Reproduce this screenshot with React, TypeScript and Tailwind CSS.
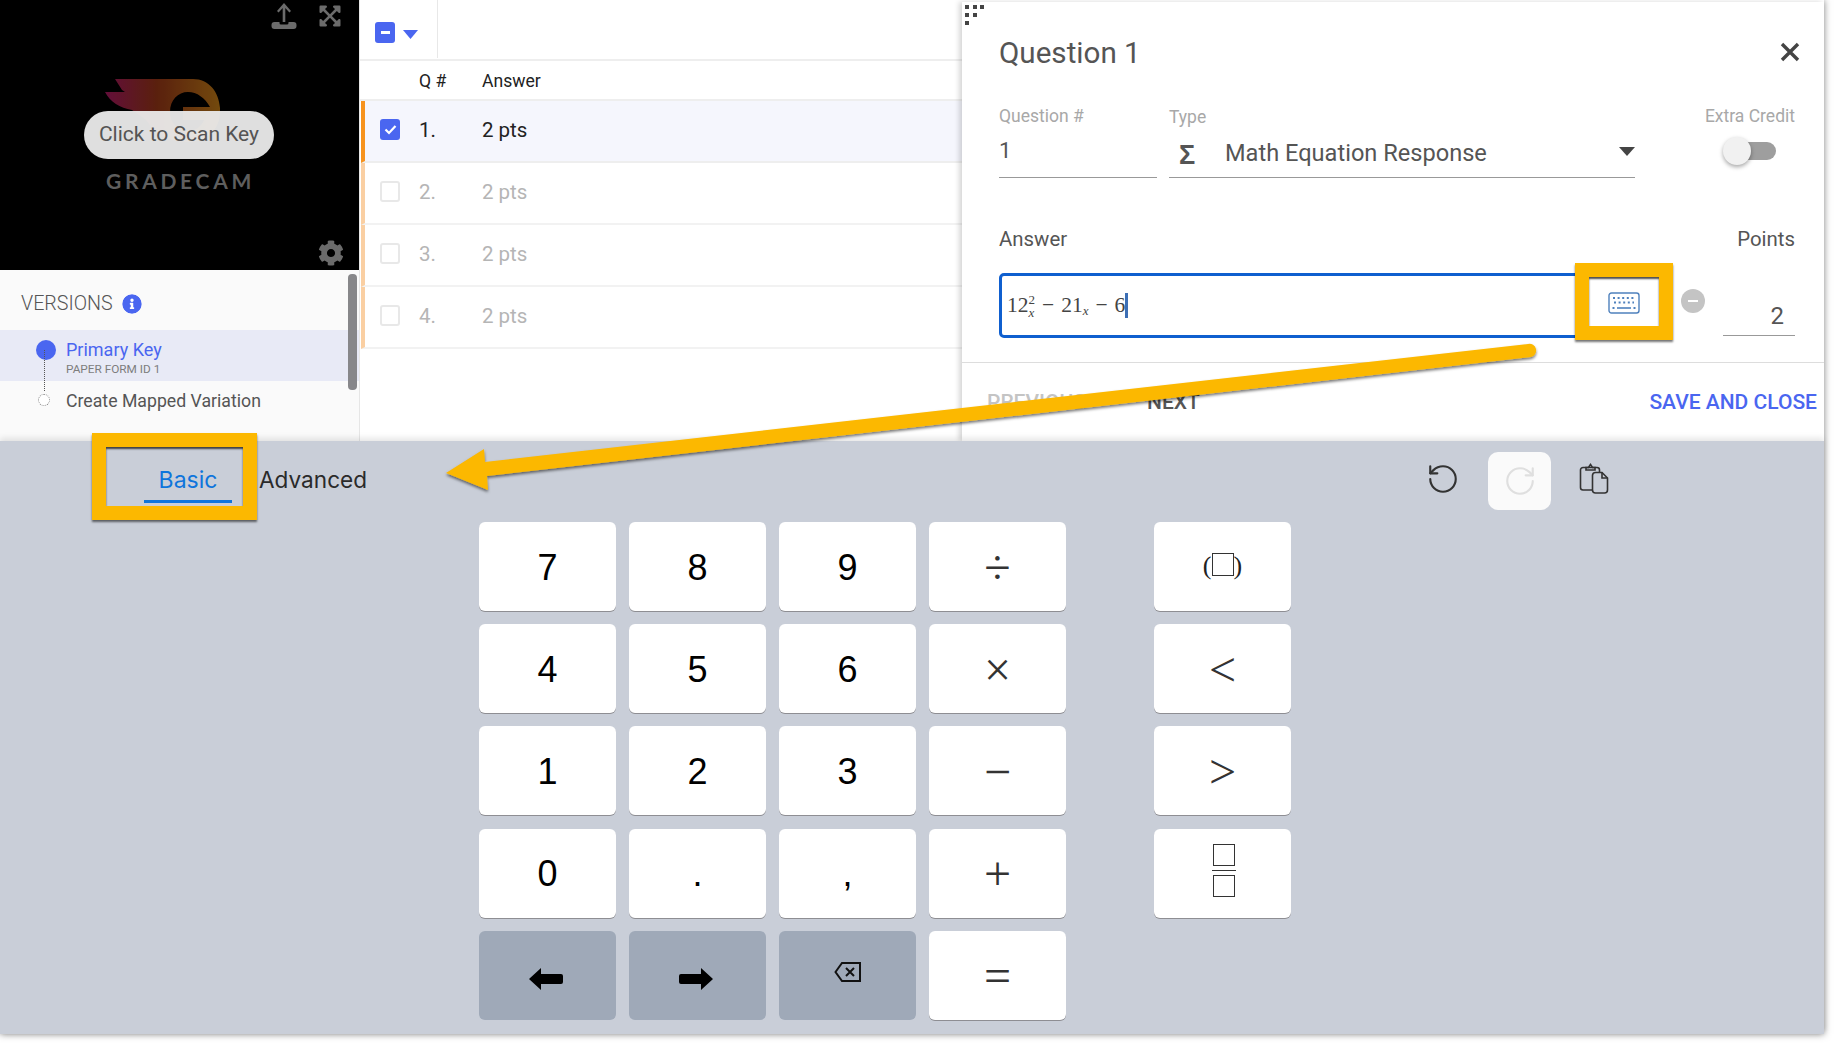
import React from "react";
import { RotateCcw, RotateCw } from "lucide-react";
import { FaCog, FaExpandArrowsAlt, FaInfoCircle } from "react-icons/fa";

const Check = ({ on }: { on?: boolean }) =>
  on ? (
    <div className="w-[20px] h-[21px] rounded-[3px] bg-[#4a66f0] flex items-center justify-center">
      <svg width="13" height="11" viewBox="0 0 13 11"><path d="M1.5 5.5 L5 9 L11.5 2" fill="none" stroke="#fff" strokeWidth="2.2" /></svg>
    </div>
  ) : (
    <div className="w-[20px] h-[21px] rounded-[3px] border-2 border-[#e8e8e8] bg-white" />
  );

const rows = ["1.", "2.", "3.", "4."];

function Sidebar() {
  return (
    <div className="w-[360px] h-full flex flex-col border-r border-[#e6e6e6]">
      <div className="relative h-[270px] w-[359px] bg-black overflow-hidden text-[#6b6b6b]">
        <div className="absolute right-[17px] top-[3px] flex items-start gap-[21px]">
          <svg width="26" height="26" viewBox="0 0 26 26" fill="#6b6b6b">
            <path d="M13 0 L20 8 L18.4 9.4 L14.3 5 V19 H11.7 V5 L7.6 9.4 L6 8 Z" />
            <path d="M0.5 22 a3 3 0 0 1 3-3 H8.5 V20 a1.5 1.5 0 0 0 1.5 1.5 H16 a1.5 1.5 0 0 0 1.5-1.5 V19 H22.5 a3 3 0 0 1 3 3 V23 a3 3 0 0 1-3 3 H3.5 a3 3 0 0 1-3-3 Z" />
          </svg>
          <FaExpandArrowsAlt size={24} className="mt-[1px]" />
        </div>
        <svg className="absolute left-[100px] top-[75px] opacity-90" width="125" height="70" viewBox="100 75 125 70">
          <defs>
            <linearGradient id="lg" x1="0" x2="1" y1="0" y2="0">
              <stop offset="0" stopColor="#6e1040" />
              <stop offset="0.45" stopColor="#64240f" />
              <stop offset="1" stopColor="#80520f" />
            </linearGradient>
          </defs>
          <path fill="url(#lg)" d="M115 79 H193 C209 79 219 92 220 108 V112 C220 130 206 142 188 142 C170 142 156 135 146 120 L132 110 C120 108 110 102 105 92 H125 L122 90 Z" />
          <path fill="#000" d="M210 107 H183 V120 H204 C201 127 195 131 188 131 C177 131 170 122 170 112 C170 100 178 92 188 92 C197 92 205 98 210 107 Z" />
        </svg>
        <div className="absolute left-[84px] top-[111px] w-[190px] h-[48px] rounded-full bg-[#ebebeb]/95 flex items-center justify-center text-[21px] text-[#545454]">Click to Scan Key</div>
        <div className="absolute left-[106px] top-[167px] text-[21px] leading-[28px] font-bold tracking-[3.7px] text-[#5e5e5e] font-['Lato',sans-serif]">GRADECAM</div>
        <FaCog size={26} className="absolute left-[318px] top-[240px]" />
      </div>
      <div className="relative flex-1 bg-[#fafafa]">
        <div className="h-[60px] pt-[7px] flex items-center pl-[21px] gap-[9px] text-[19.7px] font-light text-[#555]">
          VERSIONS <FaInfoCircle size={20} className="text-[#4a66f0] bg-white rounded-full" />
        </div>
        <div className="h-[51px] bg-[#e8eaf6] pl-[66px] relative">
          <div className="absolute left-[36px] top-[10px] w-[20px] h-[20px] rounded-full bg-[#4a66f0]" />
          <div className="text-[18px] leading-[20px] pt-[10px] text-[#4a66f0]">Primary Key</div>
          <div className="text-[11.8px] leading-[19px] text-[#7d7d7d]">PAPER FORM ID 1</div>
        </div>
        <div className="h-[40px] pl-[66px] flex items-center text-[17.7px] text-[#555] relative">
          <div className="absolute left-[38px] top-[13px] w-[12px] h-[12px] rounded-full border border-dotted border-[#888] bg-white" />
          Create Mapped Variation
        </div>
        <div className="absolute left-[44px] top-[80px] h-[41px] border-l border-dotted border-[#555]" />
        <div className="absolute left-[348px] top-[4px] w-[9px] h-[116px] rounded-[4px] bg-[#87878a]" />
      </div>
    </div>
  );
}

function Table() {
  return (
    <div className="w-[602px] h-full bg-white text-[#222]">
      <div className="h-[61px] border-b-2 border-[#eee] flex items-start">
        <div className="w-[78px] h-[58px] border-r border-[#e8e8e8] pl-[15px] pt-[22px] flex items-start gap-[8px]">
          <div className="w-[20px] h-[21px] rounded-[3px] bg-[#4a66f0] flex items-center justify-center">
            <div className="w-[9px] h-[3px] bg-white" />
          </div>
          <svg className="mt-[8px]" width="15" height="9" viewBox="0 0 15 9"><path d="M0 0 H15 L7.5 9 Z" fill="#4a66f0" /></svg>
        </div>
      </div>
      <div className="h-[40px] pt-[2px] flex items-center text-[17.6px] pl-[59px] border-b-2 border-[#eee]">
        <span className="w-[63px]">Q #</span>
        <span>Answer</span>
      </div>
      {rows.map((n, i) => (
        <div
          key={n}
          className={
            i === 0
              ? "ml-[1px] h-[62px] flex items-center border-l-4 border-b-2 border-l-[#f7931e] border-b-[#eee] bg-[#f5f6fd] text-[20.5px] text-[#222]"
              : "ml-[1px] h-[62px] flex items-center border-l-4 border-b-2 border-l-[#facfa2] border-b-[#f2f2f2] text-[20.5px] text-[#b5b5b5]"
          }
        >
          <div className="ml-[15px] w-[39px] mb-[3px]"><Check on={i === 0} /></div>
          <span className="w-[63px] mb-[2px]">{n}</span>
          <span className="mb-[2px]">2 pts</span>
        </div>
      ))}
    </div>
  );
}

function Dialog() {
  return (
    <div className="relative w-[862px] h-[439px] mt-[2px] bg-white flex flex-col shadow-[-3px_0_5px_rgba(0,0,0,0.16)]">
      <div className="absolute left-[3px] top-[3px] grid grid-cols-3 gap-x-[3px] gap-y-[4px] w-[20px]">
        {[1, 1, 1, 1, 1, 0, 1, 0, 0].map((v, i) => (
          <div key={i} className={v ? "w-[4px] h-[4px] bg-[#444]" : "w-[4px] h-[4px]"} />
        ))}
      </div>
      <div className="h-[102px] pt-[33px] px-[37px] flex justify-between items-start">
        <div className="text-[29.6px] leading-[36px] text-[#555]">Question 1</div>
        <svg className="mt-[7px] mr-[-13px]" width="20" height="20" viewBox="0 0 20 20"><path d="M2 2 L18 18 M18 2 L2 18" stroke="#444" strokeWidth="3.4" /></svg>
      </div>
      <div className="h-[74px] flex pl-[37px] pr-[29px]">
        <div className="w-[158px] border-b border-[#999]">
          <div className="text-[17.5px] leading-[24px] text-[#a8a8a8]">Question #</div>
          <div className="text-[22px] leading-[30px] mt-[8px] text-[#555]">1</div>
        </div>
        <div className="w-[466px] ml-[12px] border-b border-[#999]">
          <div className="text-[17.5px] leading-[26px] text-[#a8a8a8]">Type</div>
          <div className="flex items-center mt-[9px] h-[30px] text-[23.6px] text-[#555]">
            <span className="w-[56px] pl-[10px] pt-[2px] text-[27px] font-bold font-['Liberation_Sans',sans-serif]">Σ</span>
            <span>Math Equation Response</span>
            <svg className="ml-auto mb-[6px]" width="16" height="9" viewBox="0 0 16 9"><path d="M0 0 H16 L8 9 Z" fill="#444" /></svg>
          </div>
        </div>
        <div className="ml-auto text-right">
          <div className="text-[17.5px] leading-[24px] text-[#a8a8a8]">Extra Credit</div>
          <div className="relative mt-[9px] ml-auto mr-[19px] w-[53px] h-[30px]">
            <div className="absolute right-[0px] top-[5px] w-[40px] h-[18px] rounded-full bg-[#9e9e9e]" />
            <div className="absolute left-[0px] top-[0px] w-[28px] h-[28px] rounded-full bg-[#f1f1f1] shadow-[0_2px_4px_rgba(0,0,0,0.35)]" />
          </div>
        </div>
      </div>
      <div className="mt-[49px] flex justify-between pl-[37px] pr-[29px] text-[20.4px] leading-[24px] text-[#555]">
        <span>Answer</span>
        <span>Points</span>
      </div>
      <div className="mt-[22px] h-[65px] flex pl-[37px] pr-[29px]">
        <div className="w-[590px] h-[65px] border-[3px] border-[#0f5fcf] rounded-[5px] pl-[5px] flex items-center font-['Liberation_Serif',serif] text-[21.5px] text-[#444]">
          <span>12</span>
          <span className="inline-flex flex-col text-[13px] leading-[13px] mr-[7px]"><span>2</span><i>x</i></span>
          <span className="mr-[7px]">−</span>
          <span>21</span>
          <i className="text-[13px] mt-[10px] mr-[7px]">x</i>
          <span className="mr-[7px]">−</span>
          <span>6</span>
          <span className="w-[3px] h-[25px] bg-[#3d6fb5]" />
        </div>
        <div className="ml-[92px] mt-[16px] w-[24px] h-[24px] rounded-full bg-[#c4c4c4] flex items-center justify-center">
          <div className="w-[10px] h-[2.5px] bg-white" />
        </div>
        <div className="ml-auto w-[72px] h-[63px] border-b border-[#999] flex items-end justify-end pr-[11px] pb-[1px] text-[24px] text-[#555]">2</div>
      </div>
      <div className="mt-[24px] border-t border-[#ddd] flex-1 flex items-start pt-[25px] pl-[25px] pr-[7px] text-[21px] font-medium leading-[28px]">
        <span className="text-[#c4c4c4] w-[160px]">PREVIOUS</span>
        <span className="text-[#555]">NEXT</span>
        <span className="ml-auto text-[#4a66f0]">SAVE AND CLOSE</span>
      </div>
    </div>
  );
}

const Digit = ({ t, dark, children }: { t?: string; dark?: boolean; children?: React.ReactNode }) => (
  <div
    className={
      dark
        ? "w-[137px] h-[89px] rounded-[6px] bg-[#9fa9b8] flex items-center justify-center"
        : "w-[137px] h-[89px] rounded-[6px] bg-white shadow-[0_1px_0_#8e8e93] flex items-center justify-center text-[36px] text-black font-['Liberation_Sans',sans-serif]"
    }
  >
    {t && <span className="pt-[2px]">{t}</span>}
    {children}
  </div>
);

const Sym = ({ t }: { t: string }) => (
  <span className="pt-[2px] text-[48px] leading-none font-['Liberation_Serif',serif] text-[#333]">{t}</span>
);

const Box = ({ c }: { c: string }) => <div className={c + " border border-[#333]"} />;

function KeyboardPanel() {
  return (
    <div className="relative z-10 flex-1 bg-[#c9ced8] shadow-[0_-3px_6px_rgba(0,0,0,0.1)]">
      <div className="h-[81px] flex items-start font-['Inter',sans-serif]">
        <div className="ml-[144px] w-[88px] h-[62px] border-b-[3px] border-[#0f75dc] text-center text-[#0f75dc] text-[23px] leading-[28px] pt-[25px]">Basic</div>
        <div className="ml-[27px] pt-[25px] text-[22.6px] leading-[28px] text-[#2a2a2a]">Advanced</div>
        <div className="ml-[1121px] mt-[11px] w-[63px] flex items-center justify-center h-[58px] relative">
          <RotateCcw size={34} strokeWidth={1.5} className="absolute left-[-62px] top-[10px] text-[#333]" />
          <div className="w-[63px] h-[58px] rounded-[10px] bg-[#fafafa] flex items-center justify-center">
            <RotateCw size={34} strokeWidth={1.5} className="text-[#dfdfdf]" />
          </div>
        </div>
        <svg className="ml-[28px] mt-[22px]" width="30" height="32" viewBox="0 0 30 32" fill="none" stroke="#333" strokeWidth="1.6">
          <path d="M14 27 H4 a2.5 2.5 0 0 1-2.5-2.5 V7 A2.5 2.5 0 0 1 4 4.5 H18 a2.5 2.5 0 0 1 2.5 2.5 V9" />
          <path d="M7 7 H16 V4.5 H13.5 L11.5 1.5 L9.5 4.5 H7 Z" />
          <path d="M16.5 9.5 H23 L28.5 15 V27 a3 3 0 0 1-3 3 H16.5 a3 3 0 0 1-3-3 V12.5 a3 3 0 0 1 3-3 Z" />
          <path d="M23 9.5 V15 H28.5" />
        </svg>
      </div>
      <div className="ml-[479px] flex items-start gap-[88px]">
        <div className="grid grid-cols-[137px_137px_137px_137px] gap-x-[13px] gap-y-[13.2px]">
          <Digit t="7" /><Digit t="8" /><Digit t="9" /><Digit><Sym t="÷" /></Digit>
          <Digit t="4" /><Digit t="5" /><Digit t="6" /><Digit><Sym t="×" /></Digit>
          <Digit t="1" /><Digit t="2" /><Digit t="3" /><Digit><Sym t="−" /></Digit>
          <Digit t="0" /><Digit t="." /><Digit t="," /><Digit><Sym t="+" /></Digit>
          <Digit dark>
            <svg className="mt-[7px] mr-[3px]" width="34" height="22" viewBox="0 0 34 22"><path d="M0 11 L12 0 V6 H32 a2 2 0 0 1 2 2 V14 a2 2 0 0 1-2 2 H12 V22 Z" fill="#000" /></svg>
          </Digit>
          <Digit dark>
            <svg className="mt-[7px] mr-[3px]" width="34" height="22" viewBox="0 0 34 22"><path d="M34 11 L22 0 V6 H2 a2 2 0 0 0-2 2 V14 a2 2 0 0 0 2 2 H22 V22 Z" fill="#000" /></svg>
          </Digit>
          <Digit dark>
            <svg className="mb-[7px]" width="27" height="20" viewBox="0 0 27 20" fill="none" stroke="#111" strokeWidth="2"><path d="M1.5 10 L8 1 H26 V19 H8 Z" /><path d="M12 6 L20 14 M20 6 L12 14" /></svg>
          </Digit>
          <Digit><Sym t="=" /></Digit>
        </div>
        <div className="flex flex-col gap-y-[13.2px]">
          <Digit>
            <span className="flex items-center mb-[2px] text-[26px] font-['Liberation_Serif',serif] text-[#222]">(<Box c="w-[22px] h-[23px] mb-[3px]" />)</span>
          </Digit>
          <Digit><Sym t="<" /></Digit>
          <Digit><Sym t=">" /></Digit>
          <Digit>
            <div className="flex flex-col items-center gap-[4px] mb-[6px] ml-[2px]">
              <Box c="w-[22px] h-[22px]" />
              <div className="w-[24px] h-[1px] bg-[#333]" />
              <Box c="w-[22px] h-[22px]" />
            </div>
          </Digit>
        </div>
      </div>
    </div>
  );
}

export default function App() {
  return (
    <div className="relative w-[1836px] h-[1043px] overflow-hidden bg-white font-['Roboto',sans-serif]">
      <div className="w-[1824px] h-[1034px] flex flex-col shadow-[0_0_7px_rgba(0,0,0,0.5)]">
        <div className="h-[441px] flex bg-white overflow-hidden">
          <Sidebar />
          <Table />
          <Dialog />
        </div>
        <KeyboardPanel />
      </div>

      <div className="absolute z-20 left-[92px] top-[433px] w-[165px] h-[87px] border-[14px] border-[#fcb800] shadow-[0_2px_2px_rgba(0,0,0,0.55),inset_0_2px_2px_rgba(0,0,0,0.7)]" />
      <div className="absolute z-20 left-[1575px] top-[263px] w-[98px] h-[77px] border-[14px] border-[#fcb800] bg-white flex items-center justify-center shadow-[0_2px_2px_rgba(0,0,0,0.55),inset_0_2px_2px_rgba(0,0,0,0.7)]">
        <svg className="mt-[3px]" width="32" height="22" viewBox="0 0 32 22" fill="none" stroke="#4f81bd">
          <rect x="1" y="1" width="30" height="20" rx="2.5" strokeWidth="1.4" />
          <path d="M5 6 H27 M6 10.5 H26" strokeWidth="2" strokeDasharray="2 2.6" />
          <path d="M9 16 H23" strokeWidth="1.6" />
          <path d="M4.5 16 H6.5 M25.5 16 H27.5" strokeWidth="2" />
        </svg>
      </div>
      <svg className="absolute z-20 left-0 top-0 pointer-events-none" width="1836" height="1043" viewBox="0 0 1836 1043">
        <defs>
          <filter id="ds" x="-5%" y="-20%" width="110%" height="140%">
            <feDropShadow dx="0" dy="2" stdDeviation="1.5" floodColor="#000" floodOpacity="0.55" />
          </filter>
        </defs>
        <path
          filter="url(#ds)"
          fill="#fcb800"
          d="M446 473 L484 449 L485 462 L1528 344 a6.5 6.5 0 0 1 3 13 L487 476 L488 490 Z"
        />
      </svg>
    </div>
  );
}
